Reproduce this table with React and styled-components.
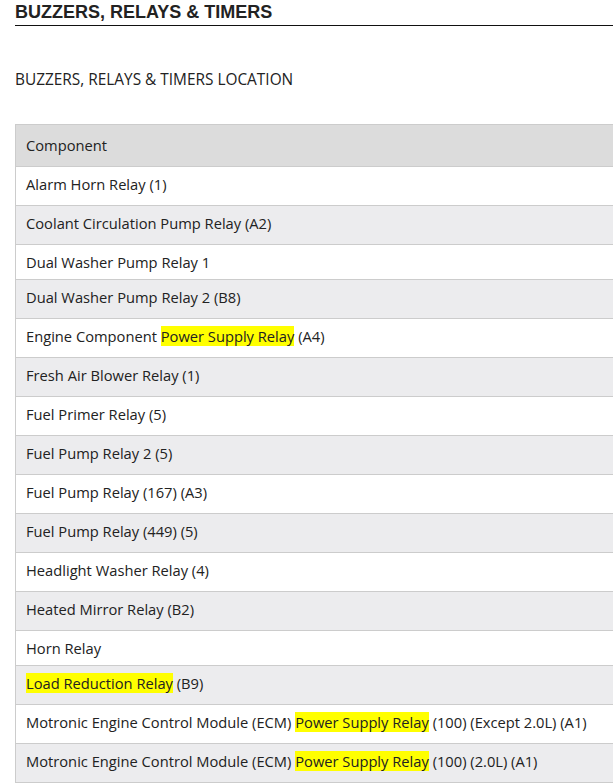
import React from "react";
import styled, { createGlobalStyle } from "styled-components";

const GlobalStyle = createGlobalStyle`
  html, body {
    margin: 0;
    padding: 0;
    background: #ffffff;
    overflow: hidden;
  }
  body {
    font-family: "Open Sans", "Noto Sans", sans-serif;
    color: #222222;
  }
  * {
    box-sizing: border-box;
  }
`;

const Page = styled.div`
  width: 100%;
  padding: 0 0 0 15px;
`;

const Title = styled.h2`
  margin: 0;
  padding-top: 1px;
  font-family: "Liberation Sans", Arial, sans-serif;
  font-size: 18px;
  font-weight: 700;
  line-height: 22px;
  color: #222222;
  border-bottom: 1px solid #111111;
  padding-bottom: 2px;
`;

const SubTitle = styled.h3`
  margin: 44px 0 0;
  font-size: 15.4px;
  font-weight: 400;
  line-height: 20px;
  color: #222222;
`;

const Table = styled.div`
  margin-top: 34px;
  border-left: 1px solid #cccccc;
  border-top: 1px solid #cccccc;
`;

const HeaderRow = styled.div`
  background: #dcdcdc;
  padding: 11px 10px;
  font-size: 14.7px;
  line-height: 19px;
  border-bottom: 1px solid #cccccc;
`;

const Row = styled.div`
  background: ${({ $odd }) => ($odd ? "#ececee" : "#ffffff")};
  padding: 8px 10px 7px;
  font-size: 14.7px;
  line-height: 19px;
  border-bottom: 1px solid #cccccc;
  white-space: nowrap;
`;

const Code = styled.span`
  display: inline-block;
  padding-bottom: 4px;
`;

const Mark = styled.span`
  background: #ffff00;
`;

const rows = [
  [["Alarm Horn Relay"], "(1)"],
  [["Coolant Circulation Pump Relay"], "(A2)"],
  [["Dual Washer Pump Relay 1"], null],
  [["Dual Washer Pump Relay 2"], "(B8)"],
  [["Engine Component ", { m: "Power Supply Relay" }], "(A4)"],
  [["Fresh Air Blower Relay"], "(1)"],
  [["Fuel Primer Relay"], "(5)"],
  [["Fuel Pump Relay 2"], "(5)"],
  [["Fuel Pump Relay"], "(167) (A3)"],
  [["Fuel Pump Relay"], "(449) (5)"],
  [["Headlight Washer Relay"], "(4)"],
  [["Heated Mirror Relay"], "(B2)"],
  [["Horn Relay"], null],
  [[{ m: "Load Reduction Relay" }], "(B9)"],
  [["Motronic Engine Control Module (ECM) ", { m: "Power Supply Relay" }], "(100) (Except 2.0L) (A1)"],
  [["Motronic Engine Control Module (ECM) ", { m: "Power Supply Relay" }], "(100) (2.0L) (A1)"],
];

export default function App() {
  return (
    <>
      <GlobalStyle />
      <Page>
        <Title>BUZZERS, RELAYS &amp; TIMERS</Title>
        <SubTitle>BUZZERS, RELAYS &amp; TIMERS LOCATION</SubTitle>
        <Table>
          <HeaderRow>Component</HeaderRow>
          {rows.map(([parts, code], i) => (
            <Row key={i} $odd={i % 2 === 1}>
              {parts.map((p, j) =>
                typeof p === "string" ? p : <Mark key={j}>{p.m}</Mark>
              )}
              {code && <Code>&nbsp;{code}</Code>}
            </Row>
          ))}
        </Table>
      </Page>
    </>
  );
}
